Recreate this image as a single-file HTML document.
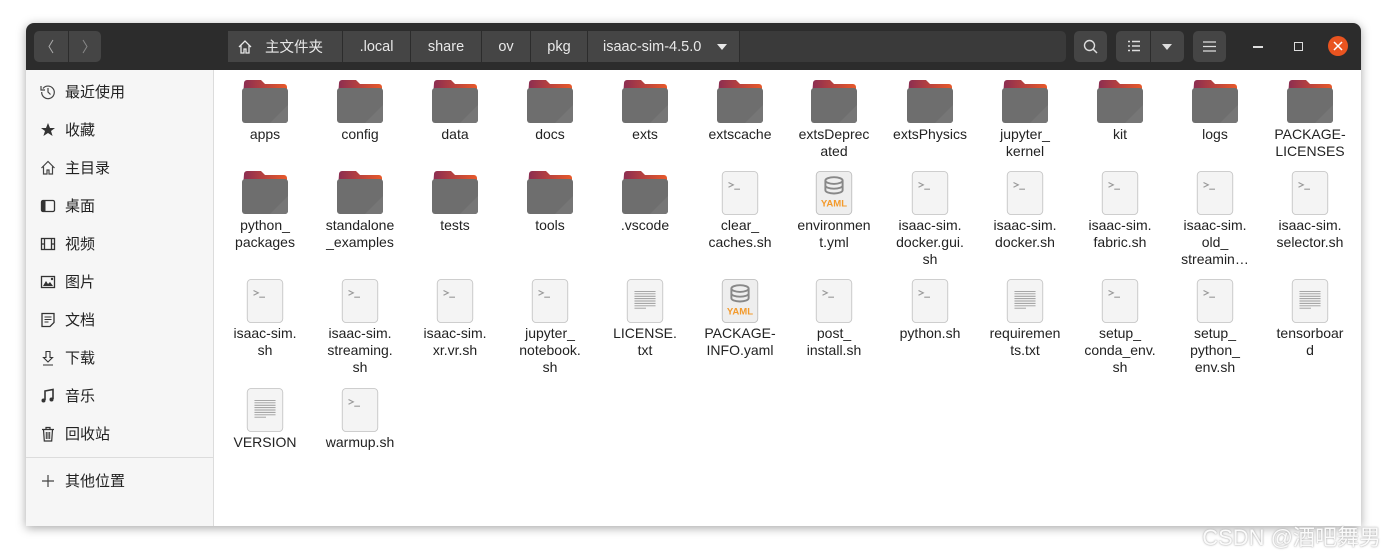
<!DOCTYPE html>
<html><head><meta charset="utf-8">
<style>
*{margin:0;padding:0;box-sizing:border-box}
body{width:1387px;height:555px;background:#fff;position:relative;overflow:hidden;font-family:"Liberation Sans","Noto Sans CJK SC",sans-serif}
.win{position:absolute;left:26px;top:23px;width:1335px;height:503px;background:#fff;border-radius:8px 8px 0 0;box-shadow:0 2px 10px rgba(0,0,0,.35);overflow:hidden}
.hd{position:absolute;left:0;top:0;width:1335px;height:47px;background:#2c2c2c}
.btn{position:absolute;top:8px;height:31px;background:#454545;border-radius:5px;color:#ddd}
.seg{position:absolute;top:0;height:31px;border-right:1px solid #2c2c2c;color:#e8e8e8;font-size:14.5px;line-height:33px;text-align:center}
.side{position:absolute;left:0;top:47px;width:188px;height:456px;background:#f6f6f6;border-right:1px solid #dcdcdc}
.si{position:absolute;left:14px;font-size:15px;color:#222;height:20px;line-height:20px;font-family:"Noto Sans CJK SC",sans-serif}
.si svg{position:absolute;left:0;top:2px}
.si span{position:absolute;left:25px;white-space:nowrap}
.it{position:absolute;width:94px;text-align:center;font-size:14px;line-height:17px;color:#222}
.it svg{display:block;margin:0 auto 1px}
.it div{height:51px;overflow:hidden}
.wm{position:absolute;right:6px;top:520px;font-size:22px;color:#fafafa;text-shadow:0 0 2px #aaa,0 0 1px #bbb;font-family:"Liberation Sans","Noto Sans CJK SC",sans-serif}
</style></head><body>
<svg width="0" height="0" style="position:absolute">
<defs>
<linearGradient id="g" x1="0" x2="1"><stop offset="0" stop-color="#8a2d52"/><stop offset="1" stop-color="#e8592a"/></linearGradient>
<symbol id="fo" viewBox="0 0 48 46"><path d="M3 4a3 3 0 0 1 3-3h14l4 4h19a3 3 0 0 1 3 3v10H2z" fill="url(#g)"/><rect x="1" y="9" width="46" height="35" rx="3" fill="#6e6e6e"/><path d="M47 26v15a3 3 0 0 1-3 3H29z" fill="#767676"/></symbol>
<symbol id="sh" viewBox="0 0 40 48"><rect x="1.5" y="1.5" width="37" height="45" rx="4" fill="#f4f4f4" stroke="#c8c8c8"/><path d="M8 13l5 2.5-5 2.5M14 20h6" stroke="#999" stroke-width="1.2" fill="none"/></symbol>
<symbol id="tx" viewBox="0 0 40 48"><rect x="1.5" y="1.5" width="37" height="45" rx="4" fill="#f4f4f4" stroke="#c8c8c8"/><path d="M9 14h22M9 16.5h22M9 19h22M9 21.5h22M9 24h22M9 26.5h22M9 29h22M9 31.5h12" stroke="#9a9a9a" stroke-width="1"/></symbol>
<symbol id="ym" viewBox="0 0 40 48"><rect x="1.5" y="1.5" width="37" height="45" rx="4" fill="#eee" stroke="#c0c0c0"/><ellipse cx="20" cy="11" rx="9" ry="3.5" fill="none" stroke="#888" stroke-width="2"/><path d="M11 11v10c0 2 4 3.5 9 3.5s9-1.5 9-3.5V11M11 16c0 2 4 3.5 9 3.5s9-1.5 9-3.5" fill="none" stroke="#888" stroke-width="2"/><text x="20" y="38" font-size="10" font-weight="bold" fill="#f39a2c" text-anchor="middle" font-family="Liberation Sans">YAML</text></symbol>
</defs></svg>
<div class="win">
 <div class="hd">
  <div class="btn" style="left:8px;width:67px"><div style="position:absolute;left:34px;top:0;width:1px;height:31px;background:#2c2c2c"></div>
   <svg style="position:absolute;left:12px;top:8px" width="10" height="15"><path d="M7 1L3 7.5 7 14" stroke="#aaa" fill="none"/></svg>
   <svg style="position:absolute;left:46px;top:8px" width="10" height="15"><path d="M3 1l4 6.5L3 14" stroke="#888" fill="none"/></svg></div>
  <div class="btn" style="left:202px;width:838px;background:#3a3a3a">
   <div class="seg" style="left:0;width:115px;background:#454545"><svg style="position:absolute;left:9px;top:8px" width="16" height="16"><path d="M2 8L8 2l6 6M4 6.5V14h3v-4h2v4h3V6.5" stroke="#e8e8e8" fill="none" stroke-width="1.3"/></svg><span style="position:absolute;left:37px;line-height:31px;font-family:'Noto Sans CJK SC',sans-serif">主文件夹</span></div>
   <div class="seg" style="left:115px;width:68px;background:#454545">.local</div>
   <div class="seg" style="left:183px;width:71px;background:#454545">share</div>
   <div class="seg" style="left:254px;width:49px;background:#454545">ov</div>
   <div class="seg" style="left:303px;width:57px;background:#454545">pkg</div>
   <div class="seg" style="left:360px;width:152px;background:#454545;text-align:left;padding-left:15px">isaac-sim-4.5.0<svg style="position:absolute;left:129px;top:13px" width="10" height="6"><path d="M0 0h10L5 6z" fill="#e8e8e8"/></svg></div>
  </div>
  <div class="btn" style="left:1048px;width:33px"><svg style="position:absolute;left:9px;top:8px" width="16" height="16"><circle cx="6.5" cy="6.5" r="5" stroke="#ddd" fill="none" stroke-width="1.4"/><path d="M10 10l4 4" stroke="#ddd" stroke-width="1.5"/></svg></div>
  <div class="btn" style="left:1090px;width:68px"><div style="position:absolute;left:34px;top:0;width:1px;height:31px;background:#2c2c2c"></div>
   <svg style="position:absolute;left:11px;top:9px" width="14" height="13"><path d="M1 1.5h2M1 6h2M1 10.5h2M5 1.5h8M5 6h8M5 10.5h8" stroke="#ddd" stroke-width="1.4"/></svg>
   <svg style="position:absolute;left:46px;top:13px" width="10" height="6"><path d="M0 0h10L5 6z" fill="#ddd"/></svg></div>
  <div class="btn" style="left:1167px;width:33px"><svg style="position:absolute;left:10px;top:9px" width="13" height="13"><path d="M0 2h13M0 6.5h13M0 11h13" stroke="#ddd" stroke-width="1.2"/></svg></div>
  <div style="position:absolute;left:1227px;top:23px;width:10px;height:1.5px;background:#ddd"></div>
  <div style="position:absolute;left:1268px;top:19px;width:9px;height:9px;border:1.5px solid #ddd"></div>
  <div style="position:absolute;left:1302px;top:13px;width:20px;height:20px;border-radius:50%;background:#e95420"><svg style="position:absolute;left:5px;top:5px" width="10" height="10"><path d="M1 1l8 8M9 1L1 9" stroke="#fff" stroke-width="1.5"/></svg></div>
 </div>
 <div class="side">
  <div class="si" style="top:12px"><svg width="16" height="16"><path d="M3 4.5A6.3 6.3 0 1 1 1.7 8" fill="none" stroke="#444" stroke-width="1.2"/><path d="M1 2v4h4" fill="none" stroke="#444" stroke-width="1.2"/><path d="M8 4v4l2.5 2.5" fill="none" stroke="#444" stroke-width="1.2"/></svg><span>最近使用</span></div>
  <div class="si" style="top:50px"><svg width="16" height="16"><path d="M8 1l2 5h5l-4 3 1.6 5L8 11l-4.6 3L5 9 1 6h5z" fill="#333"/></svg><span>收藏</span></div>
  <div class="si" style="top:88px"><svg width="16" height="16"><path d="M1.5 8L8 1.5 14.5 8M3.5 6.5V14h3.5v-4h2v4h3.5V6.5" stroke="#444" fill="none" stroke-width="1.2"/></svg><span>主目录</span></div>
  <div class="si" style="top:126px"><svg width="16" height="16"><rect x="1.5" y="2.5" width="13" height="11" rx="1.5" fill="none" stroke="#333" stroke-width="1.3"/><rect x="1.5" y="2.5" width="4" height="11" fill="#333"/></svg><span>桌面</span></div>
  <div class="si" style="top:164px"><svg width="16" height="16"><rect x="1.5" y="2.5" width="13" height="11" fill="none" stroke="#333" stroke-width="1.3"/><path d="M4.5 2.5v11M11.5 2.5v11M1.5 8h3M11.5 8h3" stroke="#333" stroke-width="1.3"/></svg><span>视频</span></div>
  <div class="si" style="top:202px"><svg width="16" height="16"><rect x="1.5" y="2.5" width="13" height="11" fill="none" stroke="#333" stroke-width="1.3"/><path d="M3 12l3-5 2 3 2-2 3 4z" fill="#333"/><circle cx="12" cy="5" r="1.2" fill="#333"/></svg><span>图片</span></div>
  <div class="si" style="top:240px"><svg width="16" height="16"><path d="M2 1.5h12v9l-4 4H2z" fill="none" stroke="#333" stroke-width="1.3"/><path d="M4.5 5h7M4.5 7.5h7M4.5 10h4" stroke="#333"/></svg><span>文档</span></div>
  <div class="si" style="top:278px"><svg width="16" height="16"><path d="M6 1.5h4v6h2.5L8 12 3.5 7.5H6z" fill="none" stroke="#333" stroke-width="1.1"/><path d="M3 15h10" stroke="#333"/></svg><span>下载</span></div>
  <div class="si" style="top:316px"><svg width="16" height="16"><path d="M5 12V3l8-1.5V11" fill="none" stroke="#333" stroke-width="1.6"/><circle cx="3.5" cy="12.5" r="2" fill="#333"/><circle cx="11.5" cy="11.5" r="2" fill="#333"/></svg><span>音乐</span></div>
  <div class="si" style="top:354px"><svg width="16" height="16"><path d="M2 3.5h12M6 3.5V1.5h4v2M3.5 3.5l.8 11.5h7.4l.8-11.5" fill="none" stroke="#333" stroke-width="1.2"/><path d="M6.3 6v7M8 6v7M9.7 6v7" stroke="#333"/></svg><span>回收站</span></div>
  <div style="position:absolute;left:0;top:387px;width:188px;height:1px;background:#dcdcdc"></div>
  <div class="si" style="top:401px"><svg width="16" height="16"><path d="M8 2v12M2 8h12" stroke="#444" stroke-width="1.2"/></svg><span>其他位置</span></div>
 </div>
</div>
<div class="it" style="left:218px;top:79px"><svg width="48" height="46"><use href="#fo"/></svg><div>apps</div></div>
<div class="it" style="left:313px;top:79px"><svg width="48" height="46"><use href="#fo"/></svg><div>config</div></div>
<div class="it" style="left:408px;top:79px"><svg width="48" height="46"><use href="#fo"/></svg><div>data</div></div>
<div class="it" style="left:503px;top:79px"><svg width="48" height="46"><use href="#fo"/></svg><div>docs</div></div>
<div class="it" style="left:598px;top:79px"><svg width="48" height="46"><use href="#fo"/></svg><div>exts</div></div>
<div class="it" style="left:693px;top:79px"><svg width="48" height="46"><use href="#fo"/></svg><div>extscache</div></div>
<div class="it" style="left:787px;top:79px"><svg width="48" height="46"><use href="#fo"/></svg><div>extsDeprec<br>ated</div></div>
<div class="it" style="left:883px;top:79px"><svg width="48" height="46"><use href="#fo"/></svg><div>extsPhysics</div></div>
<div class="it" style="left:978px;top:79px"><svg width="48" height="46"><use href="#fo"/></svg><div>jupyter_<br>kernel</div></div>
<div class="it" style="left:1073px;top:79px"><svg width="48" height="46"><use href="#fo"/></svg><div>kit</div></div>
<div class="it" style="left:1168px;top:79px"><svg width="48" height="46"><use href="#fo"/></svg><div>logs</div></div>
<div class="it" style="left:1263px;top:79px"><svg width="48" height="46"><use href="#fo"/></svg><div>PACKAGE-<br>LICENSES</div></div>

<div class="it" style="left:218px;top:170px"><svg width="48" height="46"><use href="#fo"/></svg><div>python_<br>packages</div></div>
<div class="it" style="left:313px;top:170px"><svg width="48" height="46"><use href="#fo"/></svg><div>standalone<br>_examples</div></div>
<div class="it" style="left:408px;top:170px"><svg width="48" height="46"><use href="#fo"/></svg><div>tests</div></div>
<div class="it" style="left:503px;top:170px"><svg width="48" height="46"><use href="#fo"/></svg><div>tools</div></div>
<div class="it" style="left:598px;top:170px"><svg width="48" height="46"><use href="#fo"/></svg><div>.vscode</div></div>
<div class="it" style="left:693px;top:170px"><svg width="40" height="46"><use href="#sh"/></svg><div>clear_<br>caches.sh</div></div>
<div class="it" style="left:787px;top:170px"><svg width="40" height="46"><use href="#ym"/></svg><div>environmen<br>t.yml</div></div>
<div class="it" style="left:883px;top:170px"><svg width="40" height="46"><use href="#sh"/></svg><div>isaac-sim.<br>docker.gui.<br>sh</div></div>
<div class="it" style="left:978px;top:170px"><svg width="40" height="46"><use href="#sh"/></svg><div>isaac-sim.<br>docker.sh</div></div>
<div class="it" style="left:1073px;top:170px"><svg width="40" height="46"><use href="#sh"/></svg><div>isaac-sim.<br>fabric.sh</div></div>
<div class="it" style="left:1168px;top:170px"><svg width="40" height="46"><use href="#sh"/></svg><div>isaac-sim.<br>old_<br>streamin…</div></div>
<div class="it" style="left:1263px;top:170px"><svg width="40" height="46"><use href="#sh"/></svg><div>isaac-sim.<br>selector.sh</div></div>

<div class="it" style="left:218px;top:278px"><svg width="40" height="46"><use href="#sh"/></svg><div>isaac-sim.<br>sh</div></div>
<div class="it" style="left:313px;top:278px"><svg width="40" height="46"><use href="#sh"/></svg><div>isaac-sim.<br>streaming.<br>sh</div></div>
<div class="it" style="left:408px;top:278px"><svg width="40" height="46"><use href="#sh"/></svg><div>isaac-sim.<br>xr.vr.sh</div></div>
<div class="it" style="left:503px;top:278px"><svg width="40" height="46"><use href="#sh"/></svg><div>jupyter_<br>notebook.<br>sh</div></div>
<div class="it" style="left:598px;top:278px"><svg width="40" height="46"><use href="#tx"/></svg><div>LICENSE.<br>txt</div></div>
<div class="it" style="left:693px;top:278px"><svg width="40" height="46"><use href="#ym"/></svg><div>PACKAGE-<br>INFO.yaml</div></div>
<div class="it" style="left:787px;top:278px"><svg width="40" height="46"><use href="#sh"/></svg><div>post_<br>install.sh</div></div>
<div class="it" style="left:883px;top:278px"><svg width="40" height="46"><use href="#sh"/></svg><div>python.sh</div></div>
<div class="it" style="left:978px;top:278px"><svg width="40" height="46"><use href="#tx"/></svg><div>requiremen<br>ts.txt</div></div>
<div class="it" style="left:1073px;top:278px"><svg width="40" height="46"><use href="#sh"/></svg><div>setup_<br>conda_env.<br>sh</div></div>
<div class="it" style="left:1168px;top:278px"><svg width="40" height="46"><use href="#sh"/></svg><div>setup_<br>python_<br>env.sh</div></div>
<div class="it" style="left:1263px;top:278px"><svg width="40" height="46"><use href="#tx"/></svg><div>tensorboar<br>d</div></div>

<div class="it" style="left:218px;top:387px"><svg width="40" height="46"><use href="#tx"/></svg><div>VERSION</div></div>
<div class="it" style="left:313px;top:387px"><svg width="40" height="46"><use href="#sh"/></svg><div>warmup.sh</div></div>

<div class="wm">CSDN @酒吧舞男</div>
</body></html>
